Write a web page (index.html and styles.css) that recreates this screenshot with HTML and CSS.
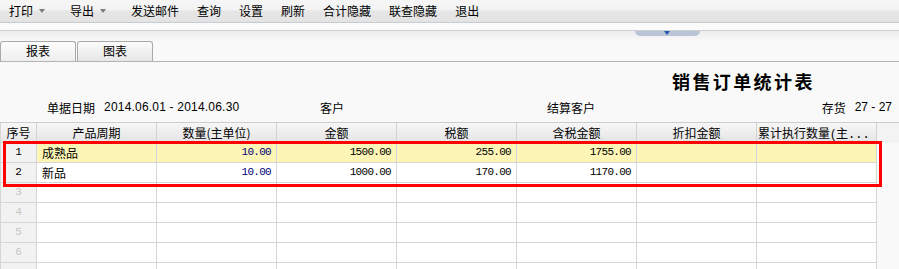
FILE: index.html
```html
<!DOCTYPE html>
<html lang="zh-CN">
<head>
<meta charset="utf-8">
<title>销售订单统计表</title>
<link rel="stylesheet" href="styles.css">
</head>
<body>
<div class="toolbar">
  <span class="tb-item tb-drop">打印<i class="caret"></i></span>
  <span class="tb-item tb-drop">导出<i class="caret"></i></span>
  <span class="tb-item">发送邮件</span>
  <span class="tb-item">查询</span>
  <span class="tb-item">设置</span>
  <span class="tb-item">刷新</span>
  <span class="tb-item">合计隐藏</span>
  <span class="tb-item">联查隐藏</span>
  <span class="tb-item">退出</span>
</div>
<div class="strip"></div>
<div class="band"><div class="handle"><i class="handle-arrow"></i></div></div>
<div class="tabs">
  <div class="tab tab-active">报表</div>
  <div class="tab">图表</div>
</div>
<div class="content">
  <div class="title">销售订单统计表</div>
  <div class="info">
    <div class="info-cell c1"><span>单据日期</span><span class="latin date">2014.06.01 - 2014.06.30</span></div>
    <div class="info-cell c2">客户</div>
    <div class="info-cell c3">结算客户</div>
    <div class="info-cell c4"><span>存货</span><span class="latin inv">27 - 27</span></div>
  </div>
  <div class="grid-wrap">
    <div class="row head">
      <div class="cell num">序号</div>
      <div class="cell">产品周期</div>
      <div class="cell">数量(主单位)</div>
      <div class="cell">金额</div>
      <div class="cell">税额</div>
      <div class="cell">含税金额</div>
      <div class="cell">折扣金额</div>
      <div class="cell trunc">累计执行数量<span class="paren">(</span>主<span class="dots">...</span></div>
      <div class="fill"></div>
    </div>
    <div class="row data hl">
      <div class="cell num">1</div>
      <div class="cell txt">成熟品</div>
      <div class="cell val qty">10.00</div>
      <div class="cell val">1500.00</div>
      <div class="cell val">255.00</div>
      <div class="cell val">1755.00</div>
      <div class="cell val"></div>
      <div class="cell val"></div>
    </div>
    <div class="row data">
      <div class="cell num">2</div>
      <div class="cell txt">新品</div>
      <div class="cell val qty">10.00</div>
      <div class="cell val">1000.00</div>
      <div class="cell val">170.00</div>
      <div class="cell val">1170.00</div>
      <div class="cell val"></div>
      <div class="cell val"></div>
    </div>
    <div class="row data empty">
      <div class="cell num">3</div><div class="cell"></div><div class="cell"></div><div class="cell"></div><div class="cell"></div><div class="cell"></div><div class="cell"></div><div class="cell"></div>
    </div>
    <div class="row data empty">
      <div class="cell num">4</div><div class="cell"></div><div class="cell"></div><div class="cell"></div><div class="cell"></div><div class="cell"></div><div class="cell"></div><div class="cell"></div>
    </div>
    <div class="row data empty">
      <div class="cell num">5</div><div class="cell"></div><div class="cell"></div><div class="cell"></div><div class="cell"></div><div class="cell"></div><div class="cell"></div><div class="cell"></div>
    </div>
    <div class="row data empty">
      <div class="cell num">6</div><div class="cell"></div><div class="cell"></div><div class="cell"></div><div class="cell"></div><div class="cell"></div><div class="cell"></div><div class="cell"></div>
    </div>
    <div class="row data empty">
      <div class="cell num"></div><div class="cell"></div><div class="cell"></div><div class="cell"></div><div class="cell"></div><div class="cell"></div><div class="cell"></div><div class="cell"></div>
    </div>
    <div class="highlight-box"></div>
  </div>
</div>
</body>
</html>
```

FILE: styles.css
```css
* { box-sizing: border-box; }
html, body { margin: 0; padding: 0; }
body {
  width: 899px;
  height: 269px;
  overflow: hidden;
  background: #f9f9f9;
  font-family: "Noto Sans CJK SC", "Liberation Sans", sans-serif;
  font-size: 12px;
  color: #000;
}

/* toolbar */
.toolbar {
  height: 23px;
  display: flex;
  align-items: center;
  background: linear-gradient(#f6f6f6 0%, #f3f3f3 45%, #e6e6e6 50%, #e3e3e3 100%);
  border-bottom: 1px solid #c4ccd4;
  line-height: 16px;
}
.tb-item {
  display: flex;
  align-items: center;
  padding: 0 9px;
  white-space: nowrap;
}
.tb-drop { padding-right: 16px; }
.caret {
  display: block;
  width: 0;
  height: 0;
  margin-left: 6px;
  border-left: 3.5px solid transparent;
  border-right: 3.5px solid transparent;
  border-top: 4px solid #7a7a7a;
}

.strip {
  height: 8px;
  background: #fbfbfb;
  border-bottom: 1px solid #cfcfcf;
}
.band {
  height: 10px;
  background: linear-gradient(#ececec, #f8f8f8);
  padding-left: 635px;
}
.handle {
  width: 65px;
  height: 5px;
  background: #b9c5d6;
  border-radius: 0 0 5px 5px;
  display: flex;
  justify-content: center;
}
.handle-arrow {
  display: block;
  width: 0;
  height: 0;
  margin-left: -2px;
  border-left: 3px solid transparent;
  border-right: 3px solid transparent;
  border-top: 4px solid #2457b0;
}

/* tabs */
.tabs {
  height: 21px;
  display: flex;
  align-items: flex-end;
  border-bottom: 1px solid #b4b4b4;
}
.tab {
  width: 76px;
  height: 20px;
  margin-right: 1px;
  border: 1px solid #a9a9a9;
  border-bottom: none;
  border-radius: 3px 3px 0 0;
  background: linear-gradient(#fbfbfb, #e6e6e6);
  text-align: center;
  line-height: 18px;
}
.tab-active {
  background: linear-gradient(#fdfdfd, #eeeeee);
}

/* title + info */
.content { padding-top: 7px; }
.title {
  height: 24px;
  padding-left: 672px;
  font-size: 18px;
  font-weight: bold;
  letter-spacing: 2.4px;
  line-height: 24px;
  white-space: nowrap;
}
.info {
  display: flex;
  margin-top: 6px;
  height: 17px;
  line-height: 17px;
  padding-left: 47px;
  padding-right: 7px;
  white-space: nowrap;
}
.info-cell { display: flex; }
.c1 { width: 273px; }
.c2 { width: 227px; }
.c3 { flex: 1; }
.c4 { justify-content: flex-end; }
.latin { font-family: "Liberation Sans", sans-serif; }
.date { margin-left: 9px; letter-spacing: 0.2px; }
.inv { margin-left: 9px; }

/* grid */
.grid-wrap {
  position: relative;
  margin-top: 6px;
  border-top: 1px solid #cdcdcd;
}
.row {
  display: grid;
  grid-template-columns: 37px repeat(7, 120px) 1fr;
  height: 20px;
}
.cell {
  border-right: 1px solid #d6d6d6;
  border-bottom: 1px solid #d6d6d6;
  background: #fff;
  line-height: 19px;
  white-space: nowrap;
  overflow: hidden;
}
.head .cell {
  background: linear-gradient(#f7f7f7, #e4e4e4);
  text-align: center;
  border-right-color: #d2d2d2;
  border-bottom-color: #cfcfcf;
}
.head .cell.trunc {
  text-align: left;
  padding-left: 1px;
}
.paren {
  font-family: "Liberation Sans", sans-serif;
  margin: 0 1px;
}
.dots {
  font-family: "Liberation Mono", monospace;
  letter-spacing: 0;
}
.head .fill { background: #f3f3f3; }
.cell.num {
  text-align: center;
  background: #f2f2f2;
  border-left: 1px solid #d6d6d6;
}
.head .cell.num {
  background: linear-gradient(#f7f7f7, #e6e6e6);
  text-align: center;
}
.data .cell.num {
  font-family: "Liberation Mono", monospace;
  font-size: 11px;
}
.empty .cell.num { color: #c6c6c6; }
.hl .cell { background: #fcf5b5; }
.hl .cell.num { background: #f2f2f2; }
.txt { padding-left: 5px; }
.val {
  text-align: right;
  padding-right: 5px;
  font-family: "Liberation Mono", monospace;
  font-size: 11px;
  letter-spacing: -0.7px;
}
.qty { color: #00007a; }

.highlight-box {
  position: absolute;
  left: 3px;
  top: 18px;
  width: 879px;
  height: 46px;
  border: 3px solid #ff0000;
  pointer-events: none;
}
```
